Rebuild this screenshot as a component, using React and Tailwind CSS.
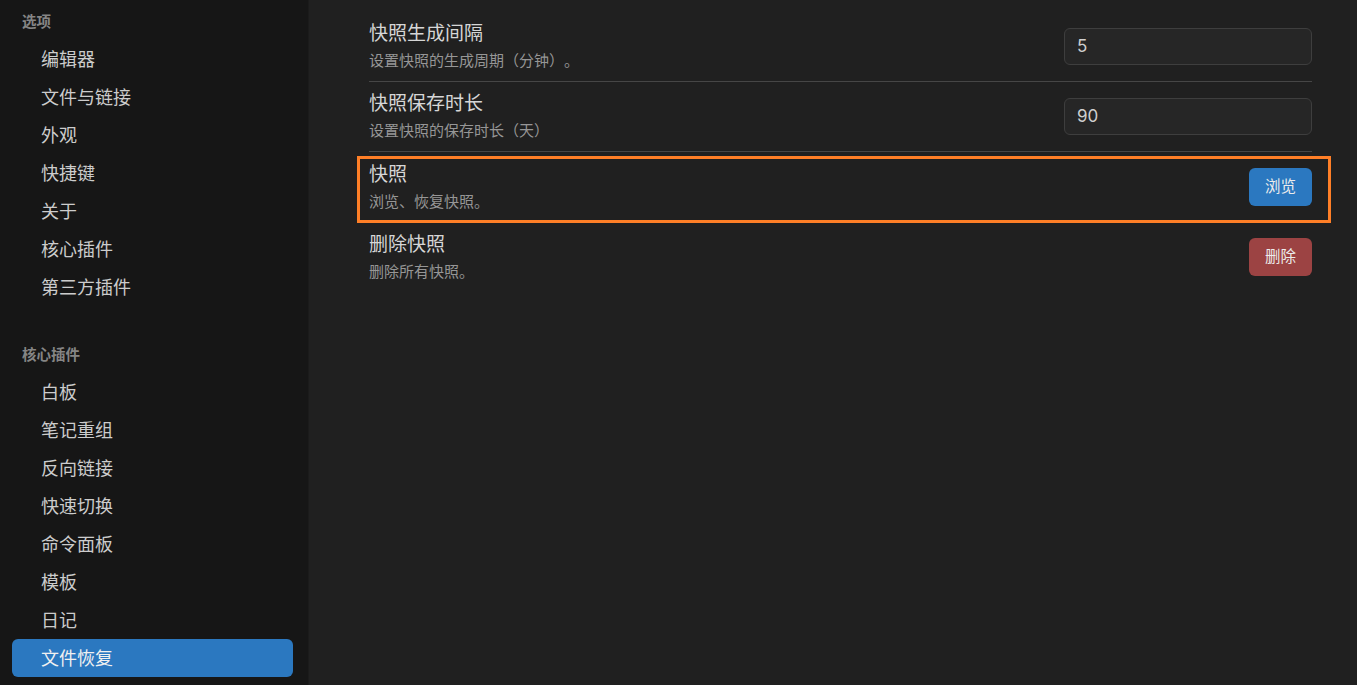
import { X } from "lucide-react";

const optionItems = ["编辑器", "文件与链接", "外观", "快捷键", "关于", "核心插件", "第三方插件"];
const pluginItems = ["白板", "笔记重组", "反向链接", "快速切换", "命令面板", "模板", "日记", "文件恢复"];

const font = { fontFamily: 'Inter, "Noto Sans CJK SC", sans-serif' };

function NavGroup({ title, items, active, className = "" }) {
  return (
    <div className={className}>
      <div className="h-9 flex items-center pl-[22px] text-[14.5px] font-semibold text-[#858585]">{title}</div>
      {items.map((item) => (
        <div
          key={item}
          className={`ml-3 mr-[15px] h-[38px] flex items-center pl-[29px] rounded-md text-[18px] ${
            item === active ? "bg-[#2b78c0] text-[#f0f0f0]" : "text-[#cccccc]"
          }`}
        >
          {item}
        </div>
      ))}
    </div>
  );
}

function SettingRow({ name, desc, children, border = true }) {
  return (
    <div className={`h-[70px] flex items-center justify-between ${border ? "border-b border-[#464646]" : ""}`}>
      <div className="flex flex-col">
        <div className="text-[19px] leading-[24px] text-[#d6d6d6]">{name}</div>
        <div className="mt-[5px] text-[15px] leading-[20px] text-[#969696] [text-spacing-trim:space-all]">{desc}</div>
      </div>
      {children}
    </div>
  );
}

function NumberInput({ value }) {
  return (
    <div className="w-[248px] h-[37px] flex items-center pl-3 rounded-md border border-[#3e3e3e] bg-[#262626] text-[17px] text-[#cfcfcf]">
      {value}
    </div>
  );
}

export default function App() {
  return (
    <div className="w-[1357px] h-[685px] flex overflow-hidden bg-[#202020]" style={font}>
      {/* SIDEBAR */}
      <div className="w-[309px] shrink-0 bg-[#161616] border-r border-[#1b1b1b] pt-1">
        <NavGroup title="选项" items={optionItems} />
        <NavGroup title="核心插件" items={pluginItems} active="文件恢复" className="mt-[31px]" />
      </div>

      {/* MAIN */}
      <div className="relative flex-1 pl-[60px] pr-[45px] pt-[12px]">
        <X className="absolute right-[8px] -top-[14px] w-4 h-4 text-[#8a8a8a]" />

        <SettingRow name="快照生成间隔" desc="设置快照的生成周期（分钟）。">
          <NumberInput value="5" />
        </SettingRow>

        <SettingRow name="快照保存时长" desc="设置快照的保存时长（天）">
          <NumberInput value="90" />
        </SettingRow>

        <div className="relative">
          <SettingRow name="快照" desc="浏览、恢复快照。" border={false}>
            <button className="w-[63px] h-[38px] rounded-md bg-[#2b78c0] text-[15.5px] text-[#ececec]">浏览</button>
          </SettingRow>
          <span className="absolute -left-3 -right-[19px] top-[4px] -bottom-[1px] border-[3px] border-[#ff7f27] pointer-events-none" />
        </div>

        <SettingRow name="删除快照" desc="删除所有快照。" border={false}>
          <button className="w-[63px] h-[38px] rounded-md bg-[#9c4343] text-[15.5px] text-[#ececec]">删除</button>
        </SettingRow>
      </div>
    </div>
  );
}
